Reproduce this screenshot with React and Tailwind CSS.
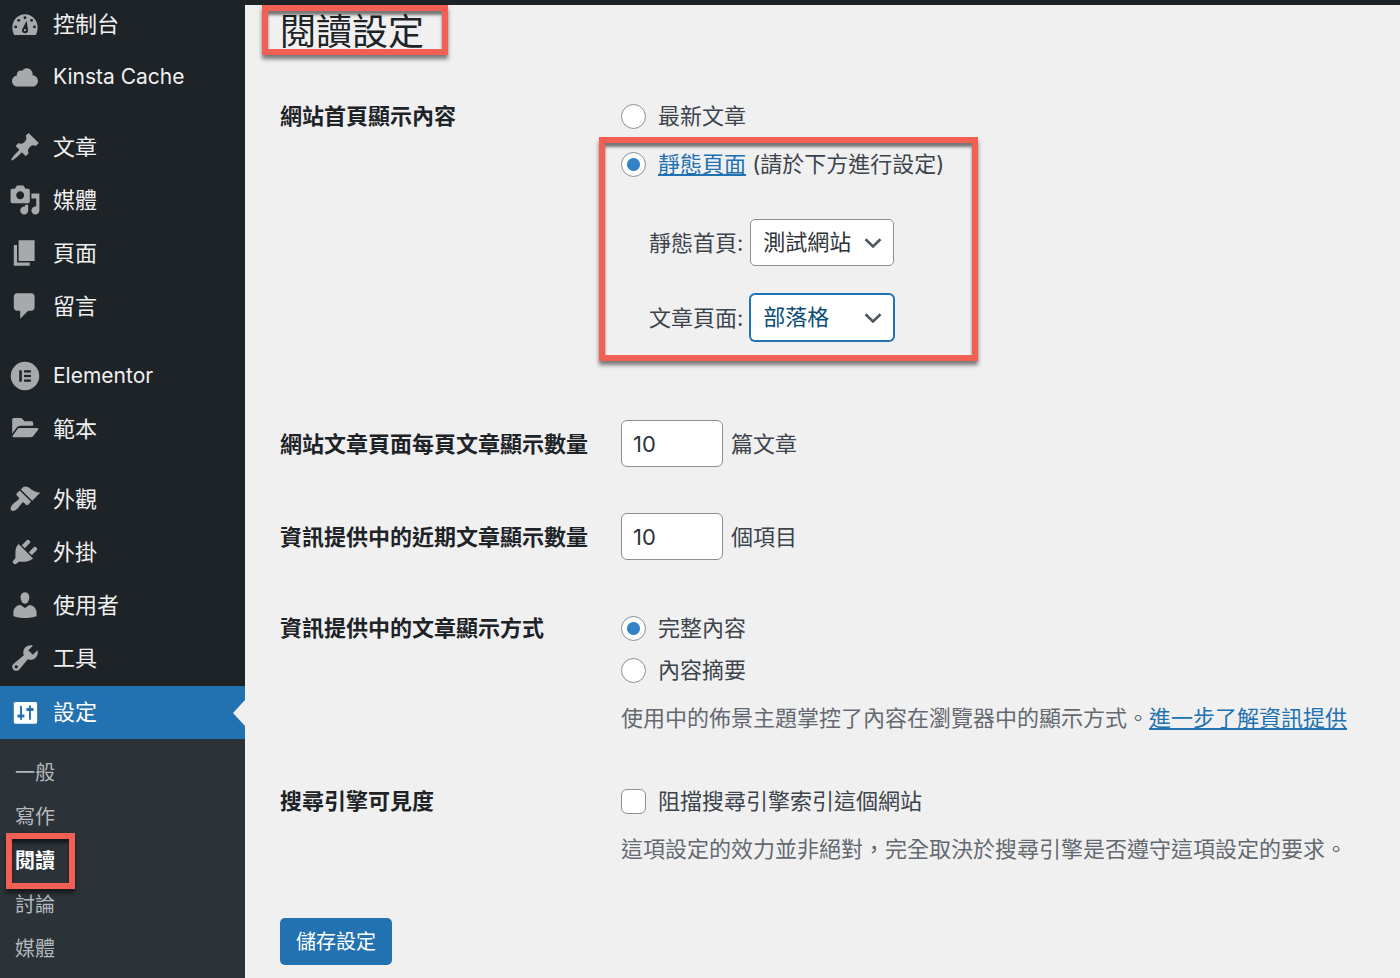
import React, { useState } from "react";

const ICONS = {
  dashboard: (
    <>
      <path
        fillRule="evenodd"
        d="M3.3 16.9h13.4c.8-1.3 1.200-2.900 1.200-4.700C17.900 7.400 14.300 3.900 10 3.900s-7.900 3.500-7.900 8.300c0 1.800.4 3.400 1.200 4.700zM11 8l.9 5.700c.1 1.200-.7 2.100-1.900 2.100s-2-.9-1.900-2c.1-.5.3-.9.6-1.300z"
      />
      <g fill="#1d2327">
        <circle cx="10" cy="6.1" r="0.9" />
        <circle cx="6.1" cy="7.7" r="0.9" />
        <circle cx="14.100" cy="7.700" r="0.9" />
        <circle cx="4.200" cy="11.800" r="0.9" />
        <circle cx="15.900" cy="11.800" r="0.9" />
      </g>
      <circle cx="10" cy="13.9" r="0.7" />
    </>
  ),
  cloud: (
    <path d="M14.7 8.900c1.900.1 3.400 1.700 3.400 3.600 0 1.900-1.600 3.500-3.500 3.500h-9.200c-1.900 0-3.500-1.500-3.500-3.500 0-1.800 1.300-3.300 3.100-3.500-.1-.2-.1-.3-.1-.5 0-1.400 1.100-2.500 2.500-2.500.3 0 .700.1.9.200.5-1 1.500-1.700 2.700-1.700 2.100 0 3.800 1.700 3.800 3.700 0 .300-.1.500-.1.700z" />
  ),
  post: (
    <path d="M10.44 3.02l1.82-1.82 6.36 6.35-1.83 1.82c-1.05-.68-2.48-.57-3.41.36l-.75.75c-.92.93-1.04 2.35-.35 3.41l-1.83 1.82-2.41-2.41-2.8 2.79c-.42.42-3.38 2.71-3.8 2.29s1.86-3.39 2.28-3.81l2.79-2.79L4.1 9.36l1.83-1.82c1.05.69 2.48.57 3.4-.36l.75-.75c.93-.92 1.05-2.35.36-3.41z" />
  ),
  media: (
    <path d="M13 11V4c0-.55-.45-1-1-1h-1.67L9 1H5L3.67 3H2c-.55 0-1 .45-1 1v7c0 .55.45 1 1 1h10c.55 0 1-.45 1-1zM7 4.5c1.38 0 2.5 1.12 2.5 2.5S8.38 9.5 7 9.5 4.5 8.38 4.5 7 5.62 4.5 7 4.5zM14 6h5v10.5c0 1.38-1.12 2.5-2.5 2.5S14 17.88 14 16.5s1.12-2.5 2.5-2.5c.17 0 .34.02.5.05V9h-3V6zm-4 8.05V13h2v3.5c0 1.38-1.12 2.5-2.5 2.5S7 17.88 7 16.5 8.12 14 9.5 14c.17 0 .34.02.5.05z" />
  ),
  page: <path d="M6 15V2h10v13H6zm-1 1h8v2H3V5h2v11z" />,
  comment: (
    <path d="M5 2h9c1.1 0 2 .9 2 2v7c0 1.1-.9 2-2 2h-2l-5 5v-5H5c-1.1 0-2-.9-2-2V4c0-1.1.9-2 2-2z" />
  ),
  elementor: (
    <>
      <circle cx="10" cy="10" r="8.9" />
      <g fill="#1d2327">
        <path d="M6.4 6.400h1.600v7.200H6.400z" />
        <path d="M9.400 6.400h4.300v1.400H9.400z" />
        <path d="M9.400 9.300h4.300v1.400H9.400z" />
        <path d="M9.400 12.200h4.300v1.400H9.400z" />
      </g>
    </>
  ),
  folder: (
    <>
      <path d="M2 12.900V4.300c0-.7.500-1.100 1.100-1.100h4.200c.5 0 .8.200 1.100.5l1.300 1.400h4.300c.7 0 1.100.4 1.100 1.100v1.700H7.500c-1.200 0-2.200.5-2.900 1.400z" />
      <path d="M2.700 15.100c-.5 0-.7-.4-.4-.9l2.800-3.900c.4-.6 1-.9 1.700-.9h10.900c.6 0 .9.500.5 1l-2.900 3.800c-.5.600-1 .9-1.700.9z" />
    </>
  ),
  appearance: (
    <path d="M14.48 11.06L7.41 3.99l1.5-1.5c.5-.56 2.3-.47 3.51.32 1.21.8 1.43 1.28 2.91 2.1 1.18.64 2.45 1.26 4.45.85zm-.71.71L6.7 4.7 4.93 6.47c-.39.39-.39 1.02 0 1.41l1.06 1.06c.39.39.39 1.03 0 1.42-.6.6-1.43 1.11-2.21 1.69-.35.26-.7.53-1.01.84C1.43 14.23.4 16.08 1.4 17.07c.99 1 2.84-.03 4.18-1.36.31-.31.58-.66.85-1.02.57-.78 1.08-1.61 1.69-2.21.39-.39 1.02-.39 1.41 0l1.06 1.06c.39.39 1.02.39 1.41 0z" />
  ),
  plugins: (
    <path d="M13.11 4.36L9.87 7.6 8 5.73l3.24-3.24c.35-.34 1.05-.2 1.56.32.52.51.66 1.21.31 1.55zm-8 1.77l.91-1.12 9.01 9.01-1.19.84c-.71.71-2.63 1.16-3.82 1.16H6.14L4.9 17.26c-.59.59-1.54.59-2.12 0-.59-.58-.59-1.53 0-2.12l1.24-1.24v-3.88c0-1.13.4-3.19 1.09-3.89zm7.26 3.97l3.24-3.24c.34-.35 1.04-.21 1.55.31.52.51.66 1.21.31 1.55l-3.24 3.25z" />
  ),
  users: (
    <path d="M10 9.25c-2.27 0-2.73-3.44-2.73-3.44C7 4.02 7.82 2 9.97 2c2.16 0 2.98 2.02 2.71 3.81 0 0-.41 3.44-2.68 3.44zm0 2.57L12.72 10c2.39 0 4.52 2.33 4.52 4.53v2.49s-3.65 1.13-7.24 1.13c-3.65 0-7.24-1.13-7.24-1.13v-2.49c0-2.25 1.94-4.48 4.47-4.48z" />
  ),
  tools: (
    <path d="M16.68 9.77c-1.34 1.34-3.3 1.67-4.95.99l-5.41 6.52c-.99.99-2.59.99-3.58 0s-.99-2.59 0-3.57l6.52-5.42c-.68-1.65-.35-3.61.99-4.95 1.28-1.28 3.12-1.62 4.72-1.06l-2.89 2.89 2.82 2.82 2.86-2.87c.53 1.58.18 3.39-1.08 4.65zM3.81 16.21c.4.39 1.04.39 1.43 0 .4-.4.4-1.04 0-1.43-.39-.4-1.03-.4-1.43 0-.39.39-.39 1.03 0 1.43z" />
  ),
  settings: (
    <>
      <rect x="3" y="3.7" width="14.600" height="13.600" rx="1" />
      <g fill="#2271b1">
        <path d="M6.9 6.200h1.200v5.400h1.500v1.800H8.100v1.500H6.900v-1.500H5.300v-1.800h1.600z" />
        <path d="M12.500 6h1.200v1.500h1.600v1.800h-1.600v5.600h-1.200V9.300h-1.600V7.500h1.600z" />
      </g>
    </>
  ),
};

const MENU_GROUPS = [
  [
    { icon: "dashboard", label: "控制台" },
    { icon: "cloud", label: "Kinsta Cache", latin: true },
  ],
  [
    { icon: "post", label: "文章" },
    { icon: "media", label: "媒體" },
    { icon: "page", label: "頁面" },
    { icon: "comment", label: "留言" },
  ],
  [
    { icon: "elementor", label: "Elementor", latin: true },
    { icon: "folder", label: "範本" },
  ],
  [
    { icon: "appearance", label: "外觀" },
    { icon: "plugins", label: "外掛" },
    { icon: "users", label: "使用者" },
    { icon: "tools", label: "工具" },
    { icon: "settings", label: "設定", current: true },
  ],
];

const SUBMENU = ["一般", "寫作", "閱讀", "討論", "媒體"];

function MenuItem({ icon, label, latin, current }) {
  return (
    <li>
      <a
        href="#"
        className={
          current
            ? "relative flex h-[53px] items-center gap-3 bg-[#2271b1] pb-0.5 pl-[9px] text-white"
            : "flex h-[53px] items-center gap-3 pb-1 pl-[9px] text-[#f0f0f1]"
        }
      >
        <svg
          viewBox="0 0 20 20"
          className={
            current ? "size-8 fill-current" : "size-8 fill-[#a7aaad]"
          }
        >
          {ICONS[icon]}
        </svg>
        <span className={latin ? "text-[21px]" : ""}>{label}</span>
        {current && (
          <span className="absolute right-0 top-1/2 -translate-y-1/2 border-y-[13px] border-r-[12px] border-y-transparent border-r-[#f0f0f1]" />
        )}
      </a>
    </li>
  );
}

// Red frame that sits over whatever it highlights
function Highlight({ className }) {
  return (
    <span
      className={`pointer-events-none absolute border-6 border-[#f15f55] shadow-[0_4px_4px_rgba(0,0,0,0.5),inset_0_4px_3px_rgba(0,0,0,0.5)] ${className}`}
    />
  );
}

function Sidebar() {
  return (
    <aside className="w-[245px] shrink-0 overflow-hidden bg-[#1d2327]">
      <nav className="-mt-px flex flex-col">
        <ul className="flex flex-col gap-[17px]">
          {MENU_GROUPS.map((group, i) => (
            <li key={i}>
              <ul>
                {group.map((item) => (
                  <MenuItem key={item.label} {...item} />
                ))}
              </ul>
            </li>
          ))}
        </ul>
        <ul className="bg-[#2c3338] py-3 text-[20px]">
          {SUBMENU.map((label) => (
            <li key={label} className="relative">
              <a
                href="#"
                className={
                  label === "閱讀"
                    ? "flex h-11 items-center pl-[15px] font-semibold text-white"
                    : "flex h-11 items-center pl-[15px] text-[#b4b9be]"
                }
              >
                {label}
              </a>
              {label === "閱讀" && (
                <Highlight className="-inset-y-1.5 left-1.5 w-[69px]" />
              )}
            </li>
          ))}
        </ul>
      </nav>
    </aside>
  );
}

function Row({ label, htmlFor, center, className = "", children }) {
  const Label = htmlFor ? "label" : "div";
  return (
    <div className={`flex ${center ? "items-center" : "items-start"} ${className}`}>
      <Label
        htmlFor={htmlFor}
        className="w-[341px] shrink-0 font-semibold text-[#1d2327]"
      >
        {label}
      </Label>
      <div className="min-w-0 flex-1">{children}</div>
    </div>
  );
}

function Radio({ id, name, checked, onChange, children }) {
  return (
    <div className="flex items-center gap-3">
      <input
        id={id}
        type="radio"
        name={name}
        checked={checked}
        onChange={onChange}
        className="size-[25px] shrink-0 appearance-none rounded-full border border-[#8c8f94] bg-white checked:bg-[radial-gradient(circle,#3582c4_6px,#fff_7px)]"
      />
      <label htmlFor={id}>{children}</label>
    </div>
  );
}

function PageSelect({ id, label, value, focused }) {
  return (
    <div className="flex items-center gap-[7px]">
      <label htmlFor={id}>{label}</label>
      <div className="relative">
        <select
          id={id}
          defaultValue={value}
          className={
            focused
              ? "h-[47px] w-36 appearance-none rounded-[5px] border border-[#2271b1] bg-white pb-0.5 pl-3 text-[#0a4b78] ring-1 ring-[#2271b1] outline-none"
              : "h-[47px] w-36 appearance-none rounded-[5px] border border-[#8c8f94] bg-white pb-0.5 pl-3 text-[#2c3338]"
          }
        >
          <option>測試網站</option>
          <option>部落格</option>
        </select>
        <svg
          viewBox="0 0 20 12"
          className="pointer-events-none absolute top-1/2 right-[11px] h-3 w-5 -translate-y-1/2 fill-none stroke-[#50575e] stroke-[2.6]"
        >
          <path d="M2.500 2.300l7.500 7.200 7.500-7.200" />
        </svg>
      </div>
    </div>
  );
}

function NumberField({ id, suffix }) {
  return (
    <div className="flex items-center gap-2">
      <input
        id={id}
        type="text"
        inputMode="numeric"
        defaultValue="10"
        className="h-[47px] w-[102px] rounded-[6px] border border-[#8c8f94] bg-white px-[11px] text-[#2c3338]"
      />
      <span>{suffix}</span>
    </div>
  );
}

export default function App() {
  const [front, setFront] = useState("page");
  const [feed, setFeed] = useState("full");

  return (
    <div
      lang="zh-Hant"
      className="flex min-h-screen bg-[#f0f0f1] font-[Inter,'Noto_Sans_CJK_TC',sans-serif] text-[22px] leading-[30px] text-[#3c434a]"
    >
      <Sidebar />
      <main className="min-w-0 flex-1 border-t-5 border-[#1d2327] pl-[35px]">
        <div className="relative w-fit">
          <h1 className="text-[36px] leading-[54px] text-[#1d2327]">
            閱讀設定
          </h1>
          <Highlight className="top-0 -right-6 bottom-1 -left-[18px]" />
        </div>

        <form className="pt-[42px]" onSubmit={(e) => e.preventDefault()}>
          <Row label="網站首頁顯示內容">
            <Radio
              id="front-posts"
              name="front"
              checked={front === "posts"}
              onChange={() => setFront("posts")}
            >
              最新文章
            </Radio>
            <div className="relative mt-[18px] w-fit">
              <Radio
                id="front-page"
                name="front"
                checked={front === "page"}
                onChange={() => setFront("page")}
              >
                <a href="#" className="text-[#2271b1] underline">
                  靜態頁面
                </a>{" "}
                (請於下方進行設定)
              </Radio>
              <div className="mt-10 flex flex-col gap-7 pl-7">
                <PageSelect
                  id="page-on-front"
                  label="靜態首頁:"
                  value="測試網站"
                />
                <PageSelect
                  id="page-for-posts"
                  label="文章頁面:"
                  value="部落格"
                  focused
                />
              </div>
              <Highlight className="-top-3 -right-[34px] -bottom-5 -left-[22px]" />
            </div>
          </Row>

          <Row
            label="網站文章頁面每頁文章顯示數量"
            htmlFor="posts-per-page"
            center
            className="mt-[79px]"
          >
            <NumberField id="posts-per-page" suffix="篇文章" />
          </Row>

          <Row
            label="資訊提供中的近期文章顯示數量"
            htmlFor="posts-per-rss"
            center
            className="mt-[46px]"
          >
            <NumberField id="posts-per-rss" suffix="個項目" />
          </Row>

          <Row label="資訊提供中的文章顯示方式" className="mt-[53px]">
            <div className="flex flex-col gap-3">
              <Radio
                id="feed-full"
                name="feed"
                checked={feed === "full"}
                onChange={() => setFeed("full")}
              >
                完整內容
              </Radio>
              <Radio
                id="feed-summary"
                name="feed"
                checked={feed === "summary"}
                onChange={() => setFeed("summary")}
              >
                內容摘要
              </Radio>
            </div>
            <p className="mt-[18px] text-[#646970]">
              使用中的佈景主題掌控了內容在瀏覽器中的顯示方式。
              <a href="#" className="text-[#2271b1] underline">
                進一步了解資訊提供
              </a>
            </p>
          </Row>

          <Row label="搜尋引擎可見度" className="mt-[53px]">
            <div className="flex items-center gap-3">
              <input
                id="blog-public"
                type="checkbox"
                className="size-[25px] shrink-0 appearance-none rounded-[6px] border border-[#8c8f94] bg-white checked:bg-[#3582c4]"
              />
              <label htmlFor="blog-public">阻擋搜尋引擎索引這個網站</label>
            </div>
            <p className="mt-[18px] text-[#646970]">
              這項設定的效力並非絕對，完全取決於搜尋引擎是否遵守這項設定的要求。
            </p>
          </Row>

          <button
            type="submit"
            className="mt-[54px] h-[47px] rounded-[5px] bg-[#2271b1] px-4 text-[20px] text-white"
          >
            儲存設定
          </button>
        </form>
      </main>
    </div>
  );
}
